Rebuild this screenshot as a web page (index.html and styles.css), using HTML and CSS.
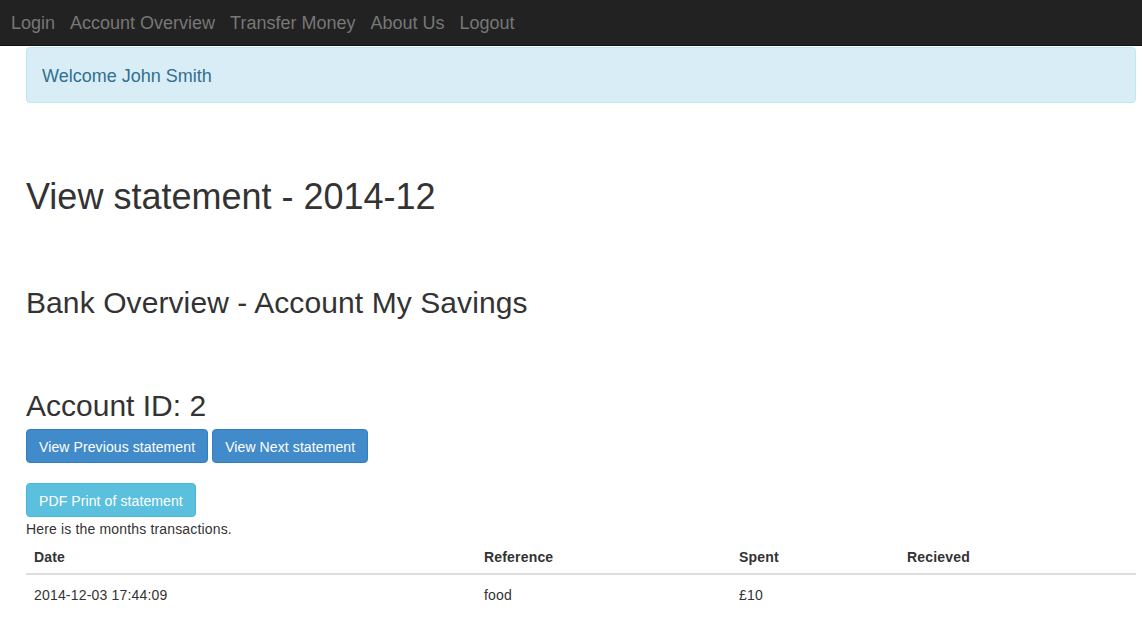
FILE: index.html
```html
<!DOCTYPE html>
<html lang="en">
<head>
<meta charset="utf-8">
<title>View statement</title>
<link rel="stylesheet" href="styles.css">
</head>
<body>
<nav class="navbar">
  <ul class="nav">
    <li><a href="#">Login</a></li>
    <li><a href="#">Account Overview</a></li>
    <li><a href="#">Transfer Money</a></li>
    <li><a href="#">About Us</a></li>
    <li><a href="#">Logout</a></li>
  </ul>
</nav>
<main class="container">
  <div class="alert">Welcome John Smith</div>
  <h1 class="title">View statement - 2014-12</h1>
  <h2 class="subtitle">Bank Overview - Account My Savings</h2>
  <h2 class="account">Account ID: 2</h2>
  <div class="btn-row">
    <a class="btn btn-primary" href="#">View Previous statement</a>
    <a class="btn btn-primary" href="#">View Next statement</a>
  </div>
  <div class="btn-row pdf-row">
    <a class="btn btn-info" href="#">PDF Print of statement</a>
  </div>
  <p class="intro">Here is the months transactions.</p>
  <table class="table">
    <thead>
      <tr>
        <th class="c-date">Date</th>
        <th class="c-ref">Reference</th>
        <th class="c-spent">Spent</th>
        <th>Recieved</th>
      </tr>
    </thead>
    <tbody>
      <tr>
        <td>2014-12-03 17:44:09</td>
        <td>food</td>
        <td>£10</td>
        <td></td>
      </tr>
    </tbody>
  </table>
</main>
</body>
</html>
```
FILE: styles.css
```css
* { box-sizing: border-box; }
html, body { margin: 0; padding: 0; }
body {
  font-family: "Liberation Sans", Arial, sans-serif;
  font-size: 14px;
  line-height: 20px;
  color: #333;
  background: #fff;
}
.navbar {
  background: #222;
  height: 46px;
  display: flex;
  align-items: center;
  border-bottom: 1px solid #111;
}
.nav {
  list-style: none;
  margin: 0;
  padding: 2px 0 0 11px;
  display: flex;
  gap: 15px;
}
.nav a {
  color: #777;
  text-decoration: none;
  font-size: 18px;
  line-height: 20px;
}
.container {
  padding: 0 6px 0 26px;
}
.alert {
  margin-top: 1px;
  background: #d9edf7;
  border: 1px solid #bce8f1;
  border-radius: 4px;
  color: #31708f;
  font-size: 18px;
  line-height: 25px;
  padding: 16px 15px 13px;
}
h1, h2 {
  font-weight: 500;
  margin: 0;
  color: #333;
}
.title {
  font-size: 36px;
  line-height: 39.6px;
  margin-top: 74px;
}
.subtitle {
  font-size: 30px;
  line-height: 33px;
  margin-top: 69px;
  letter-spacing: 0.09px;
}
.account {
  font-size: 30px;
  line-height: 33px;
  margin-top: 70px;
}
.btn-row {
  display: flex;
  gap: 4px;
  margin-top: 7px;
}
.pdf-row { margin-top: 20px; }
.btn {
  display: inline-block;
  padding: 7px 12px 5px;
  font-size: 14px;
  line-height: 20px;
  letter-spacing: 0.1px;
  border: 1px solid transparent;
  border-radius: 4px;
  color: #fff;
  text-decoration: none;
  white-space: nowrap;
}
.btn-primary { background: #428bca; border-color: #357ebd; }
.btn-info { background: #5bc0de; border-color: #46b8da; }
.intro { margin: 0; padding-top: 2px; letter-spacing: 0.16px; }
.table {
  width: 100%;
  margin-top: -2px;
  border-collapse: collapse;
  border-spacing: 0;
  table-layout: fixed;
  letter-spacing: 0.18px;
}
.table th, .table td {
  text-align: left;
  padding: 10px 8px 6px;
  line-height: 20px;
  vertical-align: top;
}
.table th {
  font-weight: bold;
  border-bottom: 2px solid #ddd;
}
.c-date { width: 450px; }
.c-ref { width: 255px; }
.c-spent { width: 168px; }
```
